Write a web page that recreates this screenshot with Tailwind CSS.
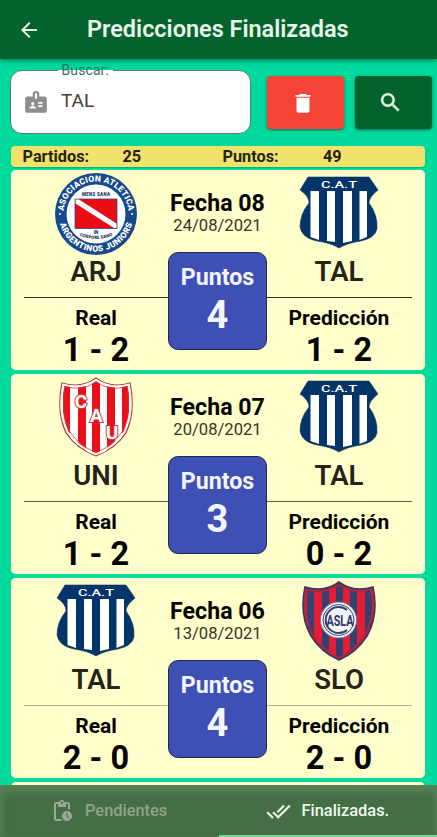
<!DOCTYPE html>
<html lang="es">
<head>
<meta charset="utf-8">
<title>Predicciones Finalizadas</title>
<script src="https://cdn.jsdelivr.net/npm/@tailwindcss/browser@4"></script>
</head>
<body class="bg-[#00da9d]">
<svg class="absolute size-0">
  <clipPath id="cu"><path d="M3 7Q22 13 37 2Q52 13 71 7Q77 35 67 57Q56 73 37 80Q18 73 7 57Q-3 35 3 7Z"/></clipPath>
  <clipPath id="cs"><path d="M3 7Q23 13 37 2Q51 13 71 7Q77 35 65 56Q55 72 37 80Q19 72 9 56Q-3 35 3 7Z"/></clipPath>
</svg>
<svg class="hidden">
  <symbol id="TAL" viewBox="0 0 80 74">
    <path d="M9 1H70L79 14Q70 21 70 27Q79 39 78 53Q76 62 62 65Q48 67 40 72Q32 67 18 65Q3 62 1 51Q1 38 10 27Q10 20 1 14Z" fill="#04356a" stroke="#16375a" stroke-width=".6"/>
    <path d="M11.500 15H20V64L11.500 61ZM28 15H36V66L28 65ZM44 15H53V65L44 67ZM60.500 15H68V61L60.500 64Z" fill="#fff"/>
    <text x="40" y="11.500" text-anchor="middle" textLength="36" lengthAdjust="spacingAndGlyphs" font-family="Roboto, sans-serif" font-weight="500" font-size="9" fill="#fff">C.A.T</text>
  </symbol>
  <symbol id="ARJ" viewBox="0 0 84 84">
    <circle cx="42" cy="42" r="41" fill="#164a8c"/>
    <circle cx="42" cy="42" r="29.500" fill="#fff"/>
    <path d="M21 27H63V56.500H21Z" fill="#e80d13" stroke="#32468c" stroke-width=".8"/>
    <path d="M21.500 27.500H25L62.500 51.500V56H60L21.500 31.500Z" fill="#fff"/>
    <path id="arcT" d="M9.500 42A32.500 32.500 0 0 1 74.500 42" fill="none"/>
    <path id="arcB" d="M4.500 42A37.500 37.500 0 0 0 79.500 42" fill="none"/>
    <g font-family="Roboto, sans-serif" font-weight="900" font-size="8.500" fill="#fff" text-anchor="middle">
      <text textLength="96"><textPath href="#arcT" startOffset="50%" textLength="96">ASOCIACION ATLETICA</textPath></text>
      <text textLength="98"><textPath href="#arcB" startOffset="50%" textLength="98">ARGENTINOS JUNIORS</textPath></text>
    </g>
    <circle cx="6" cy="42" r="1" fill="#fff"/><circle cx="78" cy="42" r="1" fill="#fff"/>
    <g font-family="Roboto, sans-serif" font-weight="900" font-size="4.500" fill="#26385f" text-anchor="middle">
      <text x="42" y="24" textLength="28">MENS SANA</text>
      <text x="42" y="62">IN</text>
      <path id="arcC" d="M20 61Q42 73 64 61" fill="none"/>
      <text><textPath href="#arcC" startOffset="50%">CORPORE SANO</textPath></text>
    </g>
  </symbol>
  <symbol id="UNI" viewBox="0 0 74 82">
    <g clip-path="url(#cu)"><path d="M0 0H74V82H0Z" fill="#fff"/><path d="M4 0H11V82H4ZM19 0H27V82H19ZM33 0H41V82H33ZM48 0H56V82H48ZM63 0H70V82H63Z" fill="#e9101a"/></g>
    <path d="M3 7Q22 13 37 2Q52 13 71 7Q77 35 67 57Q56 73 37 80Q18 73 7 57Q-3 35 3 7Z" fill="none" stroke="#b83a35" stroke-width="1.200"/>
    <path d="M4.500 8.800Q22 14 37 4Q52 14 69.500 8.800Q75 35 65.500 56Q55 71.500 37 78.300Q19 71.500 8.500 56Q-1 35 4.500 8.800Z" fill="none" stroke="#fff" stroke-width="2.200"/>
    <path d="M6 10.500Q23 15.500 37 6Q51 15.500 68 10.500Q73 35 63.500 55Q54 70 37 76.500Q20 70 10.500 55Q1 35 6 10.500Z" fill="none" stroke="#d8353a" stroke-width=".8"/>
    <g font-family="Roboto, sans-serif" font-weight="700" font-size="19" text-anchor="middle" fill="#fff" stroke="#d73a3c" stroke-width="2" paint-order="stroke">
      <text x="22" y="32">C</text><text x="37.500" y="46">A</text><text x="53" y="63">U</text>
    </g>
  </symbol>
  <symbol id="SLO" viewBox="0 0 74 82">
    <g clip-path="url(#cs)"><path d="M0 0H74V82H0Z" fill="#e41d36"/>
    <path d="M5 0H12V82H5ZM20 0H27V82H20ZM34 0H41V82H34ZM48 0H55V82H48ZM63 0H70V82H63Z" fill="#34406f"/></g>
    <path d="M3 7Q23 13 37 2Q51 13 71 7Q77 35 65 56Q55 72 37 80Q19 72 9 56Q-3 35 3 7Z" fill="none" stroke="#353a63" stroke-width="1.600"/>
    <path d="M5 9.500Q23 14.500 37 4.500Q51 14.500 69 9.500Q74 35 63.500 55Q54 70 37 78Q20 70 10.500 55Q0 35 5 9.500Z" fill="none" stroke="#b9213f" stroke-width="1.800"/>
    <circle cx="36.500" cy="40" r="18" fill="#f5f5f7" stroke="#7b82a6" stroke-width="1"/>
    <circle cx="36.500" cy="40" r="15.500" fill="none" stroke="#34406f" stroke-width="1"/>
    <path d="M45 30A13 13 0 1 0 45 50" fill="none" stroke="#34406f" stroke-width="2"/>
    <text x="38" y="45.500" text-anchor="middle" textLength="27" lengthAdjust="spacingAndGlyphs" font-family="Roboto, sans-serif" font-weight="700" font-size="15" fill="#2c3866">ASLA</text>
  </symbol>
</svg>

<div class="relative flex h-[837px] w-[437px] flex-col overflow-hidden bg-[#00da9d] font-[Roboto,sans-serif]">
  <header class="z-10 flex h-[59px] shrink-0 items-center bg-[#04632d] pl-[17px] shadow-[0_2px_5px_rgba(0,60,30,0.5)]">
    <svg class="size-6" viewBox="0 0 24 24" fill="#e9f5ea"><path d="M20 11H7.830l5.590-5.590L12 4l-8 8 8 8 1.410-1.410L7.830 13H20v-2z"/></svg>
    <h1 class="-mt-[2px] ml-[46px] whitespace-nowrap text-[23.450px] font-semibold leading-[28px] text-[#e9f7ea]">Predicciones Finalizadas</h1>
  </header>

  <div class="flex h-[87px] shrink-0 items-start pl-[10px] pt-[11px]">
    <div class="relative flex h-[64px] w-[241px] items-center rounded-[12px] border border-[#5c7a70] bg-white pl-[12px]">
      <svg class="size-[26px]" viewBox="0 0 24 24" fill="#8e8e8e"><path d="M20 7h-5V4c0-1.100-.9-2-2-2h-2c-1.100 0-2 .9-2 2v3H4c-1.100 0-2 .9-2 2v11c0 1.100.9 2 2 2h16c1.100 0 2-.9 2-2V9c0-1.100-.9-2-2-2zM9 12c.830 0 1.500.670 1.500 1.500S9.830 15 9 15s-1.500-.670-1.500-1.500S8.170 12 9 12zm3 6H6v-.750c0-1 2-1.500 3-1.500s3 .5 3 1.500V18zm1-9h-2V4h2v5zm5 7.500h-4V15h4v1.500zm0-3h-4V12h4v1.500z"/></svg>
      <span class="ml-[12px] -mt-[3px] text-[19px] leading-6 text-[#3f3f3f]">TAL</span>
      <div class="absolute left-[47px] top-[-2px] h-[3px] w-[55px] bg-gradient-to-b from-[#00da9d] from-50% to-white to-50%"></div>
      <span class="absolute left-[50.500px] top-[-11px] text-[14px] leading-[20px] tracking-[.1px] text-[#3d6f5c]">Buscar:</span>
    </div>
    <button class="ml-[16px] mt-[6px] flex h-[53px] w-[77px] items-center justify-center rounded-[4px] bg-[#f54435] pr-[5px] shadow-[0_1px_3px_rgba(0,0,0,0.5)]"><svg class="size-6" viewBox="0 0 24 24" fill="#fff"><path d="M4.500 5.800h15v-1.800h-3.700l-1-1h-5.600l-1 1H4.500zM5.500 6.800h13v13a2 2 0 0 1-2 2h-9a2 2 0 0 1-2-2z"/></svg></button>
    <button class="ml-[11px] mt-[6px] flex h-[53px] w-[77px] items-center justify-center rounded-[4px] bg-[#04632d] pr-[6px] shadow-[0_1px_3px_rgba(0,0,0,0.5)]"><svg class="size-[25px]" viewBox="0 0 24 24" fill="#e9f7ea" stroke="#e9f7ea" stroke-width=".4"><path d="M15.500 14h-.790l-.280-.270C15.410 12.590 16 11.110 16 9.500 16 5.910 13.090 3 9.500 3S3 5.910 3 9.500 5.910 16 9.500 16c1.610 0 3.090-.590 4.230-1.570l.270.280v.790l5 4.990L20.490 19l-4.990-5zm-6 0C7.010 14 5 11.990 5 9.500S7.010 5 9.500 5 14 7.010 14 9.500 11.990 14 9.500 14z"/></svg></button>
  </div>

  <div class="ml-[11px] flex h-[21px] w-[414px] shrink-0 items-center rounded-[4px] bg-[#efe36b] pl-[11.500px] text-[16.300px] font-bold leading-5 text-[#26240c] shadow-[0_1px_1px_rgba(0,90,60,0.3)]">
    <span class="w-[100px]">Partidos:</span><span class="w-[100px]">25</span><span class="w-[100.500px]">Puntos:</span><span>49</span>
  </div>

  <main id="cards" class="mt-[3px] flex flex-col gap-[4px] pl-[11px]"></main>

  <nav class="absolute inset-x-0 bottom-0 flex h-[52px] bg-[#456e45] text-[16.400px] font-medium shadow-[inset_0_9px_10px_-2px_#588258,inset_6px_0_6px_-3px_#507b50,inset_-6px_0_6px_-3px_#507b50]">
    <div class="flex w-1/2 items-center pl-[50px] text-[#8ea58c]">
      <svg class="size-6" viewBox="0 0 24 24" fill="#98a895"><path d="M17 12c-2.760 0-5 2.240-5 5s2.240 5 5 5 5-2.240 5-5-2.240-5-5-5zm1.650 7.350L16.500 17.200V14h1v2.790l1.850 1.850-.7.710zM18 3h-3.180C14.400 1.840 13.300 1 12 1s-2.400.840-2.820 2H6c-1.100 0-2 .9-2 2v15c0 1.100.9 2 2 2h6.110a6.743 6.743 0 0 1-1.420-2H6V5h2v3h8V5h2v5.080c.710.100 1.380.310 2 .6V5c0-1.100-.9-2-2-2zm-6 2c-.550 0-1-.450-1-1s.450-1 1-1 1 .450 1 1-.450 1-1 1z"/></svg>
      <span class="ml-[11px]">Pendientes</span>
    </div>
    <div class="flex w-1/2 items-center border-b-2 border-[#75d69a] pl-[47px] pt-[2px] text-[#effaee]">
      <svg class="size-[25px]" viewBox="0 0 24 24" fill="#effaee"><path d="M18 7l-1.410-1.410-6.340 6.340 1.410 1.410L18 7zm4.240-1.410L11.660 16.170 7.480 12l-1.410 1.410L11.660 19l12-12-1.420-1.410zM.410 13.410L6 19l1.410-1.410L1.830 12 .410 13.410z"/></svg>
      <span class="ml-[11px]">Finalizadas.</span>
    </div>
  </nav>
</div>

<script>
const crest = {
  TAL: '<svg class="mt-[6px] h-[74px] w-[80px]"><use href="#TAL"/></svg>',
  ARJ: '<svg class="mt-[2px] h-[84px] w-[84px]"><use href="#ARJ"/></svg>',
  UNI: '<svg class="mt-[2px] h-[82px] w-[74px]"><use href="#UNI"/></svg>',
  SLO: '<svg class="mt-[2px] h-[82px] w-[74px]"><use href="#SLO"/></svg>'
};
const side = (team, label, score, line) => `
  <div class="flex w-[145px] flex-col items-center">
    <div class="flex h-[86px] items-start">${crest[team]}</div>
    <div class="flex h-[42px] w-full justify-center border-b ${line} text-[27.500px] font-semibold leading-[32px] text-[#24241a]">${team}</div>
    <div class="mt-[8px] whitespace-nowrap text-[21px] font-bold leading-[24px]">${label}</div>
    <div class="mt-[2px] whitespace-nowrap text-[32.500px] font-bold leading-[36px]">${score}</div>
  </div>`;
const matches = [
  ['ARJ', 'TAL', '08', '24/08/2021', 4, '1 - 2', '1 - 2', 'border-[#2e2e22]'],
  ['UNI', 'TAL', '07', '20/08/2021', 3, '1 - 2', '0 - 2', 'border-[#5c5c48]'],
  ['TAL', 'SLO', '06', '13/08/2021', 4, '2 - 0', '2 - 0', 'border-[#b8b890]']
];
document.getElementById('cards').innerHTML = matches.map(([a, b, n, date, pts, real, pred, line]) => `
  <section class="flex h-[200px] w-[414px] shrink-0 rounded-[5px] bg-[#ffffcc] px-[12.500px] text-[#050503] shadow-[0_0_1px_#b8f5c0]">
    ${side(a, 'Real', real, line)}
    <div class="flex w-[98px] flex-col items-center whitespace-nowrap pt-[20px]">
      <div class="text-[23.200px] font-bold leading-[26px]">Fecha ${n}</div>
      <div class="text-[16.600px] leading-[20px] text-[#35352a]">${date}</div>
      <div class="mt-[16px] flex h-[98px] w-[99px] flex-col items-center rounded-[10px] border border-[#22264a] bg-[#3f50b5] pt-[11px] text-[#f3f5ff]">
        <div class="text-[23.200px] font-bold leading-[26px]">Puntos</div>
        <div class="mt-[3px] text-[38px] font-bold leading-[44px]">${pts}</div>
      </div>
    </div>
    ${side(b, 'Predicción', pred, line)}
  </section>`).join('') + '<section class="h-[60px] w-[414px] shrink-0 rounded-[5px] bg-[#ffffcc]"></section>';
</script>
</body>
</html>
